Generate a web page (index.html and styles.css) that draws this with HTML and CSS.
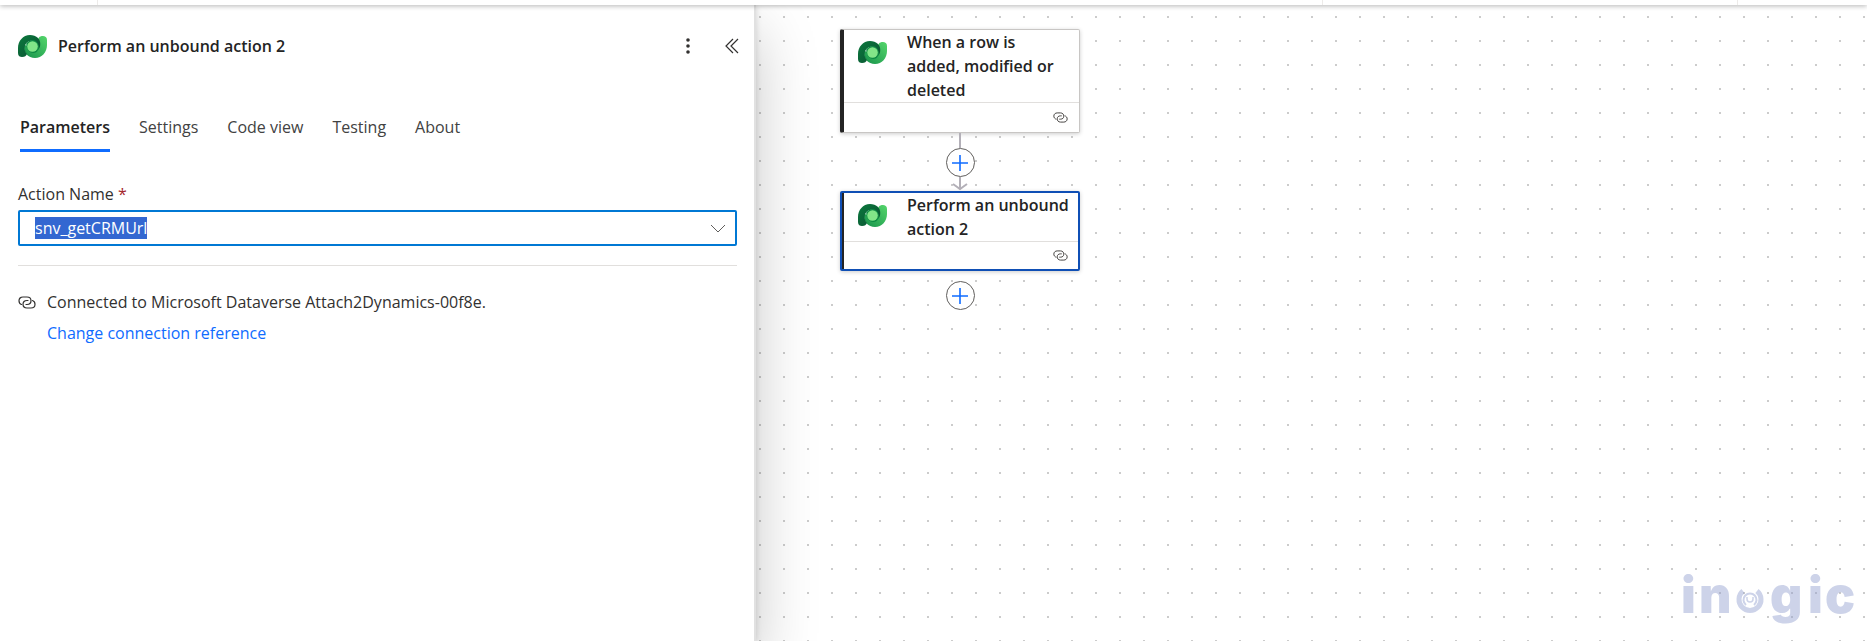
FILE: index.html
```html
<!DOCTYPE html>
<html lang="en">
<head>
    <meta charset="UTF-8">
    <title>Perform an unbound action 2</title>
    <link rel="stylesheet" href="styles.css">
</head>
<body>
    <!-- Shared icons -->
    <svg class="sprite" aria-hidden="true">
        <defs>
            <linearGradient id="darkGreen" x1="0" y1="0" x2="1" y2="1">
                <stop offset="0" stop-color="#0b7a3e"/>
                <stop offset="1" stop-color="#0a4f30"/>
            </linearGradient>
            <linearGradient id="lightGreen" x1="1" y1="0" x2="0" y2="1">
                <stop offset="0" stop-color="#55d66b"/>
                <stop offset="1" stop-color="#15914a"/>
            </linearGradient>
        </defs>
        <symbol id="dataverse" viewBox="0 0 29 23">
            <path d="M6 11C6 18 10 23 17 23C24 23 29 17 29 10V5C29 2 27 1 25 1C21 1 20 3 20 7Z" fill="url(#lightGreen)"/>
            <path d="M12 0C5 0 0 6 0 13V18C0 21 2 22 4 22C7 22 8 21 9 19C5 15 6 7 12 6C18 5 22 9 20 15C23 12 23 6 20 3C18 1 15 0 12 0Z" fill="url(#darkGreen)"/>
            <path d="M9 19C5 14 7 6 14 5C19 5 22 10 20 15C19 18 15 19 12 17C9 15 8 12 9 9C6 12 6 16 9 19Z" fill="#0d8a43"/>
            <circle cx="14.5" cy="11.5" r="5.3" fill="#82e588"/>
        </symbol>
        <symbol id="link" viewBox="0 0 18 13">
            <g fill="none" stroke="currentColor" stroke-width="1.2" stroke-linecap="round">
                <path d="M3.5 8.5C2 8 1 6.5 1 4.8C1 2.5 2.8 1 5 1H9C11.5 1 13 2.8 13 4.8C13 7 11.5 8.5 9 8.5H8"/>
                <path d="M14.5 4.5C16 5 17 6.5 17 8.2C17 10.5 15.2 12 13 12H9C6.5 12 5 10.2 5 8.2C5 6 6.5 4.5 9 4.5H10"/>
            </g>
        </symbol>
        <symbol id="plus" viewBox="0 0 18 18">
            <path d="M9 1V17M1 9H17" stroke="currentColor" stroke-width="1.6" fill="none"/>
        </symbol>
    </svg>

    <header class="toolbar"><span></span><span></span><span></span></header>

    <div class="designer">
        <section class="panel">
            <div class="panel-header">
                <svg class="connector-icon"><use href="#dataverse"/></svg>
                <h1>Perform an unbound action 2</h1>
                <button class="icon-button" aria-label="More">
                    <svg width="16" height="16" viewBox="0 0 16 16" fill="currentColor">
                        <circle cx="8" cy="2" r="1.8"/><circle cx="8" cy="8" r="1.8"/><circle cx="8" cy="14" r="1.8"/>
                    </svg>
                </button>
                <button class="icon-button" aria-label="Collapse">
                    <svg width="16" height="16" viewBox="0 0 16 16" fill="none" stroke="currentColor" stroke-width="1.2">
                        <path d="M9 1L2 8L9 15M14 1L7 8L14 15"/>
                    </svg>
                </button>
            </div>

            <nav class="tabs" role="tablist">
                <button class="tab active" role="tab" aria-selected="true">Parameters</button>
                <button class="tab" role="tab">Settings</button>
                <button class="tab" role="tab">Code view</button>
                <button class="tab" role="tab">Testing</button>
                <button class="tab" role="tab">About</button>
            </nav>

            <div class="field">
                <label for="actionName">Action Name <span class="required">*</span></label>
                <div class="combo">
                    <input type="text" id="actionName" value="snv_getCRMUrl" spellcheck="false" autocomplete="off">
                    <button class="combo-button" aria-label="Open">
                        <svg width="16" height="10" viewBox="0 0 16 10" fill="none" stroke="currentColor">
                            <path d="M1 1L8 8L15 1"/>
                        </svg>
                    </button>
                </div>
            </div>

            <div class="connection">
                <svg class="link-icon"><use href="#link"/></svg>
                <div>
                    <p>Connected to Microsoft Dataverse Attach2Dynamics-00f8e.</p>
                    <a href="#">Change connection reference</a>
                </div>
            </div>
        </section>

        <main class="canvas">
            <div class="flow">
                <article class="node">
                    <div class="node-title">
                        <svg class="connector-icon"><use href="#dataverse"/></svg>
                        <h2>When a row is added, modified or deleted</h2>
                    </div>
                    <div class="node-footer"><svg><use href="#link"/></svg></div>
                </article>

                <div class="edge">
                    <span class="edge-line"></span>
                    <button class="add" aria-label="Insert a new step"><svg><use href="#plus"/></svg></button>
                    <svg class="arrow" viewBox="0 0 16 14" fill="none" stroke="currentColor" stroke-width="2">
                        <path d="M8 0V12M1 7L8 12L15 7"/>
                    </svg>
                </div>

                <article class="node selected">
                    <div class="node-title">
                        <svg class="connector-icon"><use href="#dataverse"/></svg>
                        <h2>Perform an unbound action 2</h2>
                    </div>
                    <div class="node-footer"><svg><use href="#link"/></svg></div>
                </article>

                <button class="add last" aria-label="Add an action"><svg><use href="#plus"/></svg></button>
            </div>

            <svg class="watermark" viewBox="0 0 184 80">
                <text y="52" x="4 22">in</text>
                <g fill="none" stroke="currentColor">
                    <path d="M66 30A11 11 0 1 0 80 30" stroke-width="5"/>
                    <path d="M69 44A6.5 6.5 0 1 1 77 44" stroke-width="2"/>
                    <path d="M70 36V38A3 3 0 0 0 76 38V36" stroke-width="1.5"/>
                </g>
                <text y="52" x="93 131 148">gic</text>
            </svg>
        </main>
    </div>

    <script>
        const actionName = document.getElementById('actionName');
        actionName.focus();
        actionName.select();
    </script>
</body>
</html>
```

FILE: styles.css
```css
* {
    box-sizing: border-box;
}
body {
    margin: 0;
    height: 100vh;
    display: flex;
    flex-direction: column;
    overflow: hidden;
    font-family: "Segoe UI", "Open Sans", sans-serif;
    font-size: 16px;
    color: #323130;
    background-color: #fff;
}
h1, h2, p {
    margin: 0;
}
button {
    padding: 0;
    border: none;
    background: none;
    font: inherit;
    color: inherit;
    cursor: pointer;
}
.sprite {
    position: absolute;
    width: 0;
    height: 0;
}
.toolbar {
    position: relative;
    z-index: 2;
    flex: none;
    height: 5px;
    display: grid;
    grid-template-columns: 98px 1225px 415px;
    background-color: #fff;
    box-shadow: 0 1px 5px rgba(0, 0, 0, 0.3);
}
.toolbar span {
    border-right: 1px solid #edebe9;
}
.designer {
    flex: 1;
    display: flex;
    min-height: 0;
}

/* Details panel */
.panel {
    position: relative;
    z-index: 1;
    flex: none;
    width: 756px;
    padding: 20px 17px 0 18px;
    border-right: 2px solid #e1e1e1;
    background-color: #fff;
    box-shadow: 0 0 6px rgba(0, 0, 0, 0.15), 0 26px 58px rgba(0, 0, 0, 0.22);
}
.panel-header {
    display: flex;
    align-items: center;
    height: 42px;
}
.connector-icon {
    flex: none;
    width: 29px;
    height: 23px;
}
.panel-header h1 {
    flex: 1;
    margin-left: 11px;
    font-size: 16px;
    font-weight: 600;
    color: #242424;
}
.icon-button {
    display: flex;
    align-items: center;
    justify-content: center;
    width: 24px;
    height: 32px;
    margin-left: 20px;
}
.panel-header .icon-button:last-child {
    margin-right: -7px;
}
.tabs {
    display: flex;
    gap: 29px;
    margin: 40px 0 0 2px;
}
.tab {
    height: 45px;
    padding-bottom: 2px;
    border-bottom: 3px solid transparent;
    color: #424242;
}
.tab.active {
    font-weight: 600;
    color: #242424;
    border-color: #0f6cff;
}
.field {
    padding: 30px 0 19px;
    border-bottom: 1px solid #e1dfdd;
}
.field label {
    display: block;
    line-height: 24px;
    margin-bottom: 4px;
}
.required {
    color: #a4262c;
}
.combo {
    display: flex;
    height: 36px;
    border: 2px solid #0078d4;
    border-radius: 2px;
}
.combo input {
    flex: 1;
    padding: 0 15px;
    border: none;
    outline: none;
    font: inherit;
    color: inherit;
    background: none;
}
.combo input::selection {
    color: #fff;
    background-color: #3367d1;
}
.combo-button {
    width: 34px;
    color: #605e5c;
}
.connection {
    display: flex;
    gap: 11px;
    margin-top: 21px;
    line-height: 31px;
}
.link-icon {
    flex: none;
    width: 18px;
    height: 13px;
    margin-top: 9px;
}
.connection a {
    color: #0f6cff;
    text-decoration: none;
}

/* Canvas */
.canvas {
    position: relative;
    flex: 1;
    padding: 24px 0 0 84px;
    background-image: radial-gradient(circle, #ccc 1px, transparent 1px);
    background-size: 24px 24px;
    background-position: -8px 0;
}
.flow {
    display: flex;
    flex-direction: column;
    align-items: center;
    width: 240px;
}
.node {
    width: 240px;
    border: 1px solid #c8c6c4;
    border-left: 4px solid #242424;
    border-radius: 2px;
    background-color: #fff;
    box-shadow: 0 1px 4px rgba(0, 0, 0, 0.2);
}
.node.selected {
    border: 2px solid #0f4fb5;
    box-shadow: inset 2px 0 #242424, 0 1px 4px rgba(0, 0, 0, 0.2);
}
.node-title {
    display: flex;
    gap: 20px;
    padding: 0 8px 0 14px;
    border-bottom: 1px solid #e1dfdd;
}
.node.selected .node-title {
    margin-left: 2px;
}
.node-title .connector-icon {
    margin-top: 11px;
}
.node-title h2 {
    font-size: 16px;
    font-weight: 600;
    line-height: 24px;
    color: #242424;
}
.node-footer {
    display: flex;
    align-items: center;
    justify-content: flex-end;
    height: 29px;
    padding-right: 11px;
    color: #484644;
}
.node.selected .node-footer {
    height: 27px;
    padding-right: 10px;
}
.node-footer svg {
    width: 15px;
    height: 11px;
}
.edge {
    display: flex;
    flex-direction: column;
    align-items: center;
    color: #b3b0b8;
}
.edge-line {
    width: 2px;
    height: 15px;
    background-color: #b3b0b8;
}
.add {
    display: flex;
    align-items: center;
    justify-content: center;
    width: 29px;
    height: 29px;
    border: 1px solid #605e5c;
    border-radius: 50%;
    color: #0f6cff;
    background-color: #fff;
}
.add svg {
    width: 18px;
    height: 18px;
}
.add.last {
    margin-top: 10px;
}
.arrow {
    width: 16px;
    height: 14px;
}
.watermark {
    position: absolute;
    right: 6px;
    bottom: 0;
    width: 184px;
    height: 80px;
    color: rgba(146, 160, 208, 0.46);
}
.watermark text {
    font-family: Inter, sans-serif;
    font-size: 50px;
    font-weight: 900;
    fill: currentColor;
}
```
